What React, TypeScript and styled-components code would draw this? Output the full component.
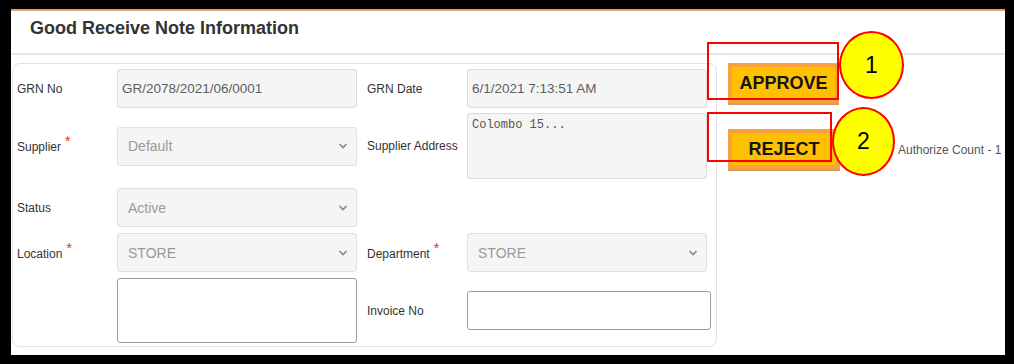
import React from 'react'
import styled, { createGlobalStyle } from 'styled-components'

const GlobalStyle = createGlobalStyle`
  html, body {
    margin: 0;
    padding: 0;
    background: #fff;
  }
  body {
    font-family: 'Liberation Sans', Arial, sans-serif;
  }
`

const Frame = styled.div`
  position: relative;
  box-sizing: border-box;
  width: 1014px;
  height: 364px;
  border-style: solid;
  border-color: #000;
  border-width: 9px 9px 9px 11px;
  background: #fff;
  overflow: hidden;
`

const Header = styled.div`
  box-sizing: border-box;
  height: 46px;
  border-top: 2px solid #e1a06f;
  border-bottom: 2px solid #e6e6e6;
  display: flex;
  align-items: center;
  padding: 0 0 8px 19px;
  color: #333;
  font-size: 18px;
  font-weight: 700;
`

const Body = styled.div`
  display: flex;
  align-items: flex-start;
`

const Panel = styled.div`
  box-sizing: border-box;
  width: 705px;
  height: 284px;
  margin: 8px 0 0 1px;
  padding: 5px 6px 3px 4px;
  border: 1px solid #e2e2e2;
  border-radius: 8px;
`

const Row = styled.div<{ $h: number; $mt?: number }>`
  display: grid;
  grid-template-columns: 90px 240px 90px 244px;
  column-gap: 10px;
  align-items: center;
  height: ${({ $h }) => $h}px;
  margin-top: ${({ $mt }) => $mt || 0}px;
`

const Label = styled.div`
  font-size: 12px;
  color: #333;
  white-space: nowrap;
`

const Req = styled.span`
  color: #d9302c;
  font-size: 14px;
  position: relative;
  top: -5px;
  margin-left: 4px;
`

const TextInput = styled.input<{ $plain?: boolean; $w?: number }>`
  box-sizing: border-box;
  width: ${({ $w }) => $w || 240}px;
  height: 39px;
  padding: 0 4px;
  margin: 0;
  font-family: 'Liberation Sans', Arial, sans-serif;
  font-size: 13.5px;
  color: #5f5f5f;
  background: ${({ $plain }) => ($plain ? '#fff' : '#f5f5f5')};
  border: 1px solid ${({ $plain }) => ($plain ? '#9c9c9c' : '#dcdcdc')};
  border-radius: 3px;
  outline: none;
`

const TextArea = styled.textarea<{ $plain?: boolean; $h: number }>`
  box-sizing: border-box;
  width: 240px;
  height: ${({ $h }) => $h}px;
  padding: 4px;
  margin: 0;
  resize: none;
  font-family: 'Liberation Mono', 'Courier New', monospace;
  font-size: 12px;
  color: #555;
  background: ${({ $plain }) => ($plain ? '#fff' : '#f5f5f5')};
  border: 1px solid ${({ $plain }) => ($plain ? '#9c9c9c' : '#dcdcdc')};
  border-radius: 3px;
  outline: none;
  display: block;
`

const SelectBox = styled.div`
  box-sizing: border-box;
  width: 240px;
  height: 39px;
  display: flex;
  align-items: center;
  justify-content: space-between;
  padding: 0 8px 0 10px;
  background: #f5f5f5;
  border: 1px solid #e0e0e0;
  border-radius: 3px;
  font-size: 14px;
  color: #9a9a9a;
`

const Actions = styled.div`
  display: flex;
  flex-direction: column;
  gap: 24px;
  padding: 8px 0 0 11px;
`

const ActionRow = styled.div`
  display: flex;
  align-items: center;
  gap: 58px;
`

const ActionButton = styled.button<{ $w: number }>`
  box-sizing: border-box;
  width: ${({ $w }) => $w}px;
  height: 40px;
  margin: 0 0 2px;
  padding: 0;
  background: #ffc000;
  border: 4px solid #f9a23c;
  box-shadow: 0 2px 0 #cf9d6b;
  font-family: 'Liberation Sans', Arial, sans-serif;
  font-size: 18px;
  font-weight: 700;
  color: #151515;
  cursor: pointer;
`

const CountText = styled.span`
  font-size: 12px;
  color: #555;
  white-space: nowrap;
`

const Callout = styled.div<{ $x: number; $y: number; $w: number; $h: number }>`
  position: absolute;
  box-sizing: border-box;
  left: ${({ $x }) => $x}px;
  top: ${({ $y }) => $y}px;
  width: ${({ $w }) => $w}px;
  height: ${({ $h }) => $h}px;
  border: 2px solid #ff0000;
`

const Badge = styled.div<{ $x: number; $y: number; $w: number; $h: number }>`
  position: absolute;
  box-sizing: border-box;
  left: ${({ $x }) => $x}px;
  top: ${({ $y }) => $y}px;
  width: ${({ $w }) => $w}px;
  height: ${({ $h }) => $h}px;
  border: 2px solid #ff0000;
  border-radius: 50%;
  background: #ffff00;
  display: flex;
  align-items: center;
  justify-content: center;
  font-size: 23px;
  color: #000;
`

const Chevron = () => (
  <svg width="10" height="8" viewBox="0 0 10 8">
    <polyline points="1.5,2 5,5.5 8.5,2" fill="none" stroke="#888" strokeWidth="1.6" />
  </svg>
)

const Select: React.FC<{ value: string }> = ({ value }) => (
  <SelectBox>
    <span>{value}</span>
    <Chevron />
  </SelectBox>
)

const App: React.FC = () => {
  return (
    <>
      <GlobalStyle />
      <Frame>
        <Header>Good Receive Note Information</Header>
        <Body>
          <Panel>
            <Row $h={39}>
              <Label>GRN No</Label>
              <TextInput readOnly value="GR/2078/2021/06/0001" />
              <Label>GRN Date</Label>
              <TextInput readOnly value="6/1/2021 7:13:51 AM" />
            </Row>
            <Row $h={66} $mt={5}>
              <Label>
                Supplier<Req>*</Req>
              </Label>
              <Select value="Default" />
              <Label>Supplier Address</Label>
              <TextArea $h={66} readOnly value="Colombo 15..." />
            </Row>
            <Row $h={39} $mt={9}>
              <Label>Status</Label>
              <Select value="Active" />
            </Row>
            <Row $h={39} $mt={6}>
              <Label>
                Location<Req>*</Req>
              </Label>
              <Select value="STORE" />
              <Label>
                Department<Req>*</Req>
              </Label>
              <Select value="STORE" />
            </Row>
            <Row $h={65} $mt={6}>
              <span />
              <TextArea $h={65} $plain />
              <Label>Invoice No</Label>
              <TextInput $plain $w={244} />
            </Row>
          </Panel>
          <Actions>
            <ActionButton $w={111}>APPROVE</ActionButton>
            <ActionRow>
              <ActionButton $w={112}>REJECT</ActionButton>
              <CountText>Authorize Count - 1</CountText>
            </ActionRow>
          </Actions>
        </Body>

        {/* annotation overlays */}
        <Callout $x={696} $y={33} $w={132} $h={58} />
        <Callout $x={696} $y={103} $w={125} $h={50} />
        <Badge $x={828} $y={22} $w={65} $h={68}>1</Badge>
        <Badge $x={821} $y={98} $w={63} $h={69}>2</Badge>
      </Frame>
    </>
  )
}

export default App
